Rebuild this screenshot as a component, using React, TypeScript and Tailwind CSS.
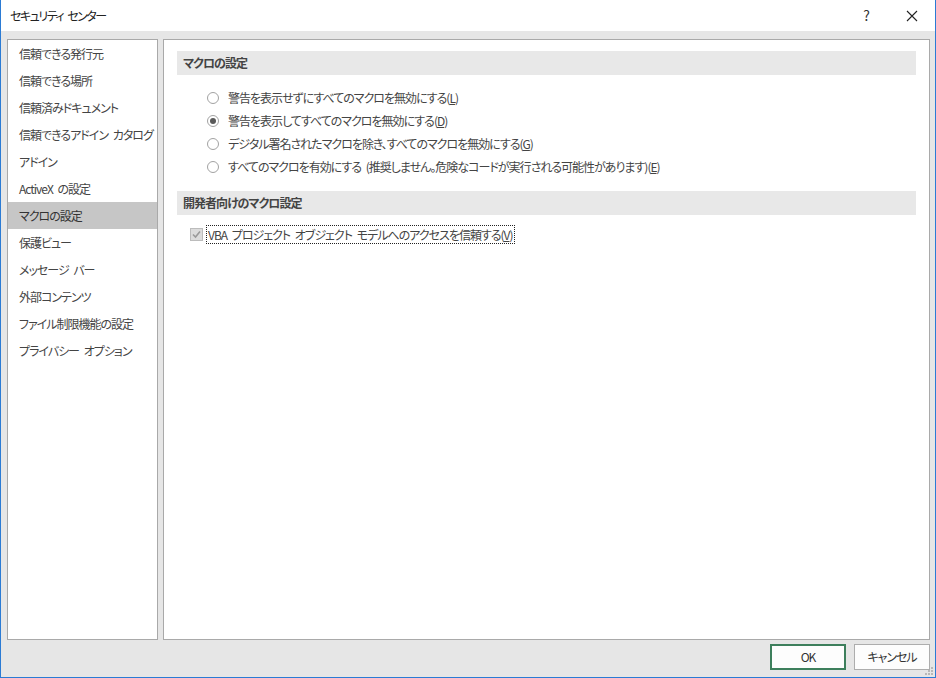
import React from "react";

const menuItems = [
  "信頼できる発行元",
  "信頼できる場所",
  "信頼済みドキュメント",
  "信頼できるアドイン カタログ",
  "アドイン",
  "ActiveX の設定",
  "マクロの設定",
  "保護ビュー",
  "メッセージ バー",
  "外部コンテンツ",
  "ファイル制限機能の設定",
  "プライバシー オプション",
];

const macroOptions = [
  { label: "警告を表示せずにすべてのマクロを無効にする", key: "L" },
  { label: "警告を表示してすべてのマクロを無効にする", key: "D" },
  { label: "デジタル署名されたマクロを除き、すべてのマクロを無効にする", key: "G" },
  { label: "すべてのマクロを有効にする (推奨しません。危険なコードが実行される可能性があります)", key: "E" },
];

function Radio({ checked }: { checked: boolean }) {
  return (
    <span className="flex h-[12px] w-[12px] shrink-0 items-center justify-center rounded-full border border-[#a2a2a2] bg-white">
      {checked ? <span className="h-[6px] w-[6px] rounded-full bg-[#5a5a5a]" /> : null}
    </span>
  );
}

function SectionHeader({ children }: { children: React.ReactNode }) {
  return (
    <div className="mx-[13px] flex h-[24px] items-center bg-[#e8e8e8] pl-[6px] font-bold text-[#444]">
      {children}
    </div>
  );
}

export default function App() {
  const selected = 6;

  return (
    <div className="flex h-[678px] w-[936px] flex-col border-x border-b border-[#2b7bd4] bg-[#e6e6e6] font-['Noto_Sans_CJK_JP',sans-serif] text-[12px] tracking-[-1px] text-[#444] [font-feature-settings:'palt'] [word-spacing:3px]">
      <div className="flex h-[31px] shrink-0 items-center bg-white pl-[9px] text-[#222]">
        <span className="flex-1 tracking-[-1.5px]">セキュリティ センター</span>
        <span className="mr-[37px] text-[14px] text-[#333]">?</span>
        <svg width="12" height="12" viewBox="0 0 12 12" className="mr-[17px]">
          <path d="M1 1 L11 11 M11 1 L1 11" stroke="#222" strokeWidth="1.1" />
        </svg>
      </div>

      <div className="flex flex-1 flex-col pl-[6px] pr-[5px] pt-[8px]">
        <div className="flex h-[601px] gap-[5px]">
          <div className="w-[151px] shrink-0 border border-[#a9a9a9] bg-white">
            {menuItems.map((item, i) => (
              <div
                key={item}
                className={
                  i === selected
                    ? "flex h-[27px] items-center whitespace-nowrap bg-[#c6c6c6] pl-[11px] text-[#333]"
                    : "flex h-[27px] items-center whitespace-nowrap pl-[11px]"
                }
              >
                {item}
              </div>
            ))}
          </div>

          <div className="flex-1 border border-[#a9a9a9] bg-white pt-[11px]">
            <SectionHeader>マクロの設定</SectionHeader>
            <div className="mt-[11px] flex flex-col pl-[43px]">
              {macroOptions.map((opt, i) => (
                <div key={opt.key} className="flex h-[23px] items-center gap-[9px] whitespace-nowrap">
                  <Radio checked={i === 1} />
                  <span>
                    {opt.label}(<span className="underline">{opt.key}</span>)
                  </span>
                </div>
              ))}
            </div>
            <div className="mt-[13px]">
              <SectionHeader>開発者向けのマクロ設定</SectionHeader>
            </div>
            <div className="mt-[10px] flex items-center pl-[26px]">
              <span className="flex h-[13px] w-[13px] items-center justify-center border border-[#bcbcbc] bg-[#dcdcdc]">
                <svg width="9" height="9" viewBox="0 0 9 9">
                  <path d="M1 4.5 L3.5 7 L8 1.5" fill="none" stroke="#9a9a9a" strokeWidth="1.6" />
                </svg>
              </span>
              <span className="ml-[3px] whitespace-nowrap border border-dotted border-[#222] px-[1px] leading-[17px]">
                VBA プロジェクト オブジェクト モデルへのアクセスを信頼する(<span className="underline">V</span>)
              </span>
            </div>
          </div>
        </div>

        <div className="relative flex flex-1 items-start justify-end gap-[8px] pt-[4px]">
          <button className="flex h-[26px] w-[76px] items-center justify-center border-2 border-[#3d7f5c] bg-[#fdfdfd] text-[#333]">
            OK
          </button>
          <button className="flex h-[26px] w-[76px] items-center justify-center border border-[#adadad] bg-[#fdfdfd] text-[#333]">
            キャンセル
          </button>
          <svg width="10" height="10" viewBox="0 0 10 10" className="absolute bottom-[1px] right-[-4px]">
            <g fill="#b8b8b8">
              <rect x="7" y="1" width="2" height="2" />
              <rect x="4" y="4" width="2" height="2" />
              <rect x="7" y="4" width="2" height="2" />
              <rect x="1" y="7" width="2" height="2" />
              <rect x="4" y="7" width="2" height="2" />
              <rect x="7" y="7" width="2" height="2" />
            </g>
          </svg>
        </div>
      </div>
    </div>
  );
}
